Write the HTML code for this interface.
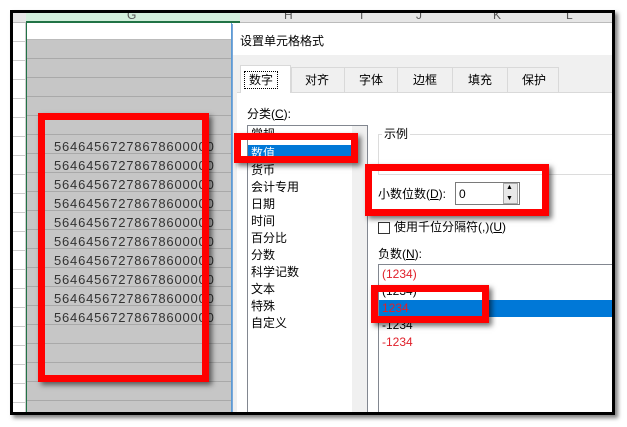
<!DOCTYPE html>
<html><head><meta charset="utf-8"><style>
*{margin:0;padding:0;box-sizing:border-box}
body{width:627px;height:427px;background:#fff;position:relative;overflow:hidden;font-family:"Liberation Sans","Noto Sans CJK SC",sans-serif;font-size:12px;color:#000}
.a{position:absolute}
.frame{left:10px;top:10px;width:605px;height:405px;border:3px solid #000;box-shadow:3px 3px 4px rgba(0,0,0,.5);overflow:hidden;background:#fff}
.rb{position:absolute;border:7px solid #f00;box-shadow:3px 3px 5px rgba(0,0,0,.55)}
.t{position:absolute;white-space:nowrap;line-height:14px}
</style></head><body>
<div class="a frame">
  <div class="a" style="left:0;top:0;width:600px;height:10px;background:#e6e6e6;border-bottom:1px solid #bbb"></div>
  <div class="a" style="left:13px;top:0;width:214px;height:10px;background:#d2eedb;border-bottom:2px solid #217346"></div>
  <div class="t" style="left:114px;top:-5px;color:#555;font-size:12px">G</div>
  <div class="t" style="left:271px;top:-5px;color:#555">H</div>
  <div class="t" style="left:347px;top:-5px;color:#555">I</div>
  <div class="t" style="left:403px;top:-5px;color:#555">J</div>
  <div class="t" style="left:480px;top:-5px;color:#555">K</div>
  <div class="t" style="left:553px;top:-5px;color:#555">L</div>
  <div class="a" style="left:0;top:10px;width:13px;height:400px;background:#fff;border-right:1px solid #ccc;background:repeating-linear-gradient(#fff 0 18px,#ccc 18px 19px)"></div>
  <div class="a" style="left:13px;top:10px;width:1px;height:400px;background:#217346"></div>
  <div class="a" style="left:14px;top:27px;width:205px;height:380px;background:repeating-linear-gradient(#c6c6c6 0 18px,#a9a9a9 18px 19px)"></div>
  <div class="a" style="left:14px;top:10px;width:205px;height:17px;background:#fff;border-bottom:1px solid #bbb"></div>
  <div class="a" style="left:218px;top:10px;width:1px;height:400px;background:#5b9bd5"></div>
  <div class="a" style="left:219px;top:11px;width:390px;height:400px;background:#f0f0f0;border-left:1px solid #7aa7d8"></div>
  <div class="a" style="left:220px;top:11px;width:390px;height:31px;background:#fff"></div>
  <div class="t" style="left:227px;top:21px">设置单元格格式</div>
  <div class="a" style="left:224px;top:79px;width:390px;height:330px;background:#fff;border-top:1px solid #d9d9d9"></div>
  <div class="a" style="left:227px;top:52px;width:51px;height:28px;background:#fff;border:1px solid #d9d9d9;border-bottom:none"></div>
  <div class="t" style="left:231px;top:58px;border:1px dotted #000;padding:1px 4px">数字</div>
  <div class="a" style="left:278px;top:54px;width:268px;height:25px;border:1px solid #d9d9d9;border-bottom:none;background:#f0f0f0"></div>
  <div class="a" style="left:331px;top:54px;width:1px;height:25px;background:#d9d9d9"></div>
  <div class="a" style="left:384px;top:54px;width:1px;height:25px;background:#d9d9d9"></div>
  <div class="a" style="left:439px;top:54px;width:1px;height:25px;background:#d9d9d9"></div>
  <div class="a" style="left:494px;top:54px;width:1px;height:25px;background:#d9d9d9"></div>
  <div class="t" style="left:292px;top:60px">对齐</div>
  <div class="t" style="left:346px;top:60px">字体</div>
  <div class="t" style="left:400px;top:60px">边框</div>
  <div class="t" style="left:455px;top:60px">填充</div>
  <div class="t" style="left:509px;top:60px">保护</div>
  <div class="t" style="left:234px;top:94px">分类(<u>C</u>):</div>
  <div class="a" style="left:234px;top:112px;width:121px;height:300px;border:1px solid #828790;background:#fff"></div>
  <div class="a" style="left:339px;top:113px;width:15px;height:298px;background:#f0f0f0"></div>
  <div class="a" style="left:235px;top:132px;width:103px;height:16px;background:#0078d7"></div>
  <div class="t" style="left:238px;top:114px">常规</div>
  <div class="t" style="left:238px;top:133px;color:#fff">数值</div>
  <div class="t" style="left:238px;top:150px">货币</div>
  <div class="t" style="left:238px;top:167px">会计专用</div>
  <div class="t" style="left:238px;top:184px">日期</div>
  <div class="t" style="left:238px;top:201px">时间</div>
  <div class="t" style="left:238px;top:218px">百分比</div>
  <div class="t" style="left:238px;top:235px">分数</div>
  <div class="t" style="left:238px;top:252px">科学记数</div>
  <div class="t" style="left:238px;top:269px">文本</div>
  <div class="t" style="left:238px;top:286px">特殊</div>
  <div class="t" style="left:238px;top:303px">自定义</div>
  <div class="a" style="left:365px;top:121px;width:250px;height:41px;border-top:1px solid #dcdcdc;border-left:1px solid #dcdcdc;border-bottom:1px solid #dcdcdc"></div>
  <div class="t" style="left:369px;top:114px;background:#fff;padding:0 2px">示例</div>
  <div class="t" style="left:365px;top:174px">小数位数(<u>D</u>):</div>
  <div class="a" style="left:442px;top:169px;width:65px;height:23px;border:1px solid #7a7a7a;background:#fff"></div>
  <div class="t" style="left:446px;top:174px">0</div>
  <div class="a" style="left:490px;top:170px;width:15px;height:21px;background:#e8e8e8;border:1px solid #aaa"></div>
  <div class="t" style="left:493px;top:168px;font-size:7px">▲</div>
  <div class="t" style="left:493px;top:179px;font-size:7px">▼</div>
  <div class="a" style="left:365px;top:209px;width:12px;height:12px;border:1px solid #333;background:#fff"></div>
  <div class="t" style="left:381px;top:207px">使用千位分隔符(,)(<u>U</u>)</div>
  <div class="t" style="left:365px;top:234px">负数(<u>N</u>):</div>
  <div class="a" style="left:365px;top:251px;width:250px;height:160px;border:1px solid #828790;background:#fff"></div>
  <div class="a" style="left:366px;top:287px;width:250px;height:17px;background:#0078d7"></div>
  <div class="t" style="left:369px;top:254px;color:#e0202a">(1234)</div>
  <div class="t" style="left:369px;top:271px">(1234)</div>
  <div class="t" style="left:369px;top:288px;color:#e0202a">1234</div>
  <div class="t" style="left:369px;top:305px">-1234</div>
  <div class="t" style="left:369px;top:322px;color:#e0202a">-1234</div>
</div>
<div class="t" style="left:54px;top:137px;color:#333;line-height:19px;font-size:13px;letter-spacing:0.8px">56464567278678600000<br>56464567278678600000<br>56464567278678600000<br>56464567278678600000<br>56464567278678600000<br>56464567278678600000<br>56464567278678600000<br>56464567278678600000<br>56464567278678600000<br>56464567278678600000</div>
<div class="rb" style="left:38px;top:113px;width:171px;height:269px"></div>
<div class="rb" style="left:234px;top:133px;width:124px;height:30px"></div>
<div class="rb" style="left:365px;top:164px;width:184px;height:52px"></div>
<div class="rb" style="left:371px;top:285px;width:118px;height:38px"></div>
</body></html>
